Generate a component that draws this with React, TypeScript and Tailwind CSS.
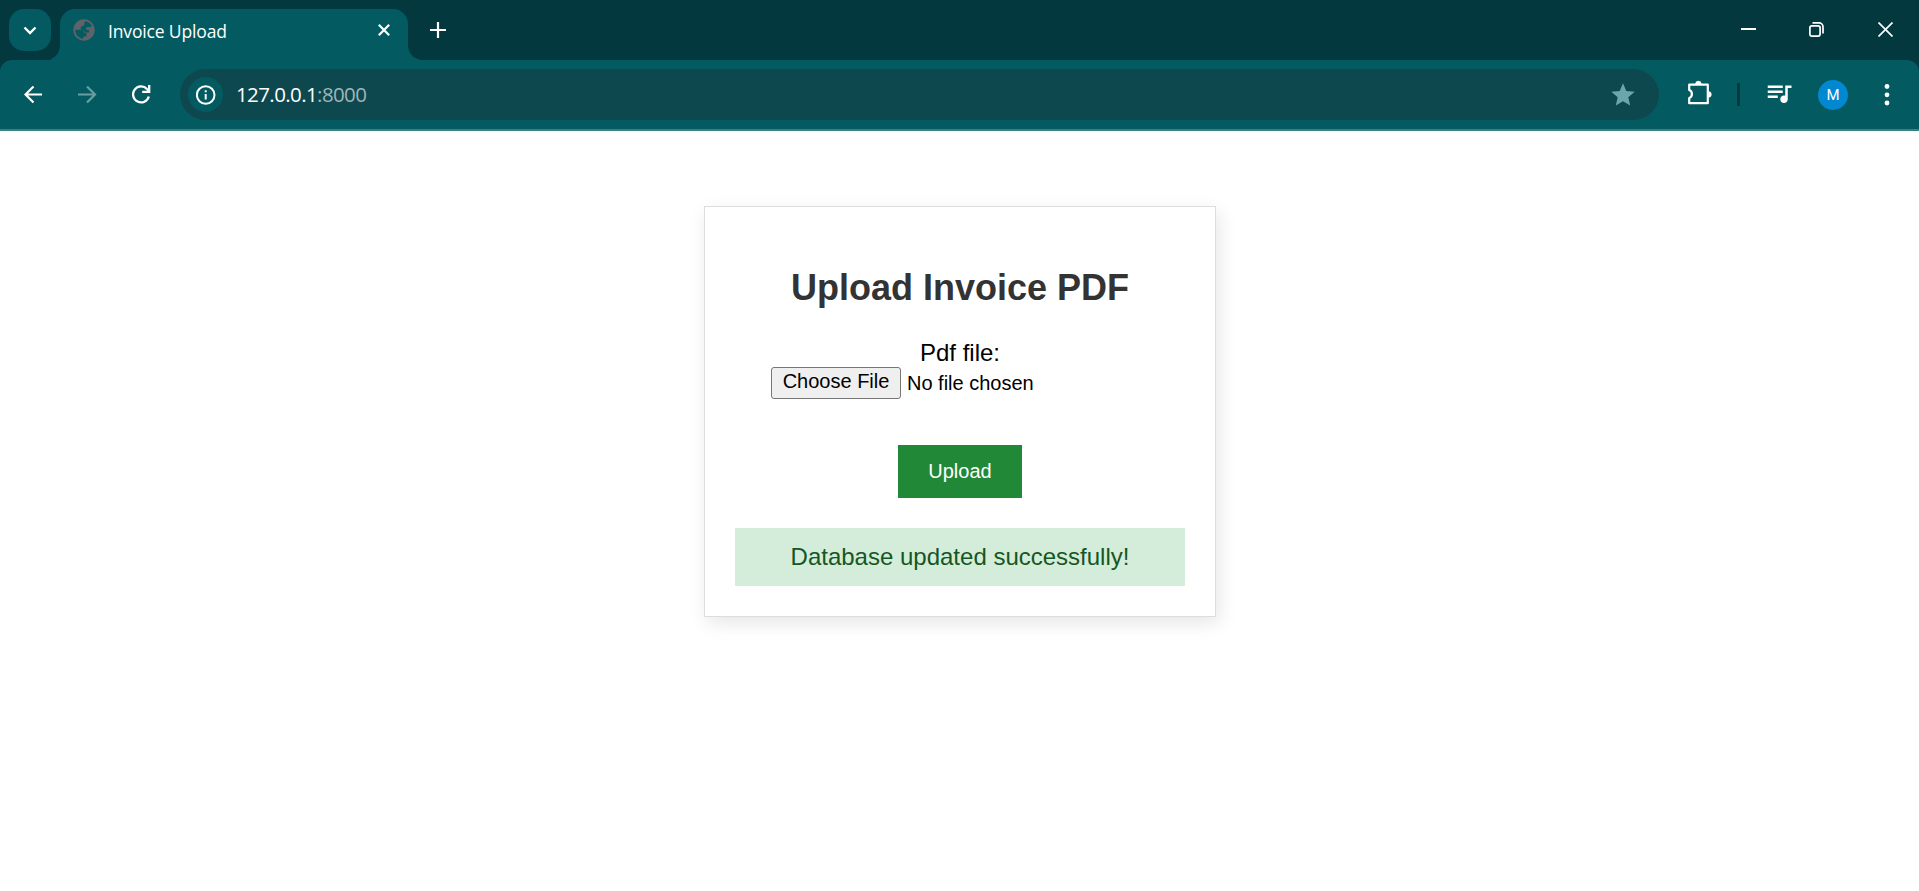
import type { ReactNode } from "react";
import { MdQueueMusic, MdStar } from "react-icons/md";

function TabStrip() {
  return (
    <div className="flex h-[60px] items-start bg-[#02383e] text-white">
      <button className="ml-[9px] mt-[9px] flex h-[42px] w-[42px] items-center justify-center rounded-[15px] bg-[#035b61]">
        <svg width="14" height="9" viewBox="0 0 14 9" fill="none" stroke="currentColor" strokeWidth="2.4">
          <path d="M1.500 1.500 7 7l5.500-5.500" />
        </svg>
      </button>
      <svg className="mt-[45px] shrink-0" width="9" height="15" viewBox="0 0 9 15" fill="#035b61">
        <path d="M9 0C9 8.500 3 15 -6 15H9z" />
      </svg>
      <div className="mt-[9px] flex h-[51px] w-[348px] items-start rounded-t-[15px] bg-[#035b61] pl-[13px]">
        <svg className="mt-[10px] shrink-0" width="22" height="22" viewBox="0 0 22 22">
          <circle cx="11" cy="11" r="10.700" fill="#5f6368" />
          <path
            d="M12 2.300c3 .3 5.500 2 6.800 4.600-1 .9-1.800 1.200-3.100 1.100-1.700-.3-2.700.2-2.700 1.500 0 1.500 1.300 1.600 3 1.700v2.200h-3.800c-1-2.600-3-2.600-4.800-3.100C7.500 7.500 9 7 11 6.500c.8-.5-.3-2.500 1-4.200z"
            fill="#035b61"
          />
          <path
            d="M2.200 10.800h5.600c2.500 0 3.400 1.200 3.400 3.300h2.200v3.300h-3.200v2.300C5.600 19.400 2.200 15.600 2.200 10.800z"
            fill="#035b61"
          />
        </svg>
        <span className="ml-[13px] mt-[10px] w-[270px] font-['Open_Sans',sans-serif] text-[17.500px] leading-6 tracking-[-0.15px]">
          Invoice Upload
        </span>
        <svg className="mt-[15px] shrink-0" width="12" height="12" viewBox="0 0 12 12" stroke="currentColor" strokeWidth="2.200">
          <path d="M.8.8 11.200 11.200M11.200.8.8 11.200" />
        </svg>
      </div>
      <svg className="mt-[45px] shrink-0" width="15" height="15" viewBox="0 0 15 15" fill="#035b61">
        <path d="M0 0C0 8.500 6.500 15 15 15H0z" />
      </svg>
      <svg className="ml-[7px] mt-[22px]" width="16" height="16" viewBox="0 0 16 16" stroke="currentColor" strokeWidth="2.200">
        <path d="M8 0v16M0 8h16" />
      </svg>
      <div className="ml-auto flex">
        <svg className="mr-[53px] mt-[22px]" width="15" height="15" viewBox="0 0 15 15" stroke="currentColor" strokeWidth="2">
          <path d="M0 7h15" />
        </svg>
        <svg className="mr-[54px] mt-[22px]" width="15" height="15" viewBox="0 0 15 15" fill="none" stroke="currentColor" strokeWidth="1.700">
          <rect x=".9" y="3.900" width="10.200" height="10.200" rx="2" />
          <path d="M3.500.9H10a4 4 0 0 1 4 4v6.600" />
        </svg>
        <svg className="mr-[26px] mt-[22px]" width="15" height="15" viewBox="0 0 15 15" stroke="currentColor" strokeWidth="1.700">
          <path d="m.5.5 14 14m0-14-14 14" />
        </svg>
      </div>
    </div>
  );
}

function Toolbar() {
  return (
    <div className="bg-[#02383e]">
      <div className="flex h-[71px] items-start rounded-t-[12px] border-b-2 border-[#3b8084] bg-[#035b61] text-white">
        <svg className="ml-[24px] mt-[25px]" width="19" height="19" viewBox="0 0 19 19" fill="none" stroke="currentColor" strokeWidth="2.200">
          <path d="M18 9.500H2M9.500 1.500l-8 8 8 8" />
        </svg>
        <svg className="ml-[35px] mt-[25px] text-[#6a9da0]" width="19" height="19" viewBox="0 0 19 19" fill="none" stroke="currentColor" strokeWidth="2.200">
          <path d="M0 9.500h16.500M9 1.500l8 8-8 8" />
        </svg>
        <svg className="ml-[35px] mt-[25px]" width="19" height="19" viewBox="0 0 19 19" fill="none" stroke="currentColor" strokeWidth="2.300">
          <path d="M16.800 11.500A8 8 0 1 1 15 4L17 6M17.200 0v6.800h-7" />
        </svg>
        <div className="ml-[29px] mt-[9px] flex h-[51px] w-[1479px] items-center rounded-full bg-[#0e484f] pl-2">
          <span className="flex h-[35px] w-[35px] items-center justify-center rounded-full bg-[#035b61]">
            <svg width="20" height="20" viewBox="0 0 20 20" fill="none" stroke="currentColor" strokeWidth="2">
              <circle cx="9.700" cy="10" r="8.800" />
              <path d="M9.700 9v5.500M9.700 5.200v2" />
            </svg>
          </span>
          <span className="mb-[2px] ml-[13px] font-['Open_Sans',sans-serif] text-[20.500px] leading-6 tracking-[-0.6px]">
            127.0.0.1<span className="text-[#9fb6b9]">:8000</span>
          </span>
          <MdStar className="ml-auto mr-[22px] text-[28px] text-[#6ba7aa]" />
        </div>
        <svg className="ml-[28px] mt-[20px]" width="25" height="25" viewBox="0 0 25 25" fill="none" stroke="currentColor" strokeWidth="2.200">
          <path d="M2.200 4.600h18.600v18.600H2.200v-5.200c3.600-1.200 3.600-6.800 0-8z" strokeLinejoin="round" />
          <path d="M8.500 4a2.900 2.900 0 0 1 5.800 0zM21.500 11.500a2.900 2.900 0 0 1 0 5.800z" fill="currentColor" strokeWidth=".4" />
        </svg>
        <span className="ml-[25px] mt-[23px] h-[23px] w-[3px] bg-[#02383e]" />
        <MdQueueMusic className="ml-[24px] mt-[18px] text-[30px]" />
        <span className="ml-[24px] mt-[20px] flex h-[30px] w-[30px] items-center justify-center rounded-full bg-[#0288d1] font-[Roboto,sans-serif] text-[15px]">
          M
        </span>
        <svg className="ml-[36px] mt-[24px]" width="6" height="22" viewBox="0 0 6 22" fill="currentColor">
          <circle cx="3" cy="2.500" r="2.400" />
          <circle cx="3" cy="10.800" r="2.400" />
          <circle cx="3" cy="19" r="2.400" />
        </svg>
      </div>
    </div>
  );
}

function Card({ children }: { children: ReactNode }) {
  return (
    <main className="ml-[704px] mt-[75px] flex h-[411px] w-[512px] flex-col items-center border border-[#dddddd] px-[30px] text-[24px] leading-[27px] shadow-[3px_6px_18px_rgba(0,0,0,0.1)]">
      {children}
    </main>
  );
}

export default function App() {
  return (
    <div className="h-[891px] w-full overflow-hidden bg-white font-['Liberation_Sans',Arial,sans-serif] text-black">
      <TabStrip />
      <Toolbar />
      <Card>
        <h2 className="mt-[60px] text-[36px] font-bold leading-[41px] text-[#333333]">Upload Invoice PDF</h2>
        <label className="mt-[31px]">Pdf file:</label>
        <div className="mt-px flex w-full items-center pl-[36px] text-[20px] leading-6">
          <button className="h-[32px] w-[130px] rounded-[3px] border border-[#767676] bg-[#efefef] pb-[3px] leading-[27px]">
            Choose File
          </button>
          <span className="ml-[6px]">No file chosen</span>
        </div>
        <button className="mt-[46px] h-[53px] w-[124px] bg-[#218838] text-[20px] text-white">Upload</button>
        <p className="mt-[30px] h-[58px] w-[450px] bg-[#d4edda] pt-[15px] text-center text-[#155724]">
          Database updated successfully!
        </p>
      </Card>
    </div>
  );
}
